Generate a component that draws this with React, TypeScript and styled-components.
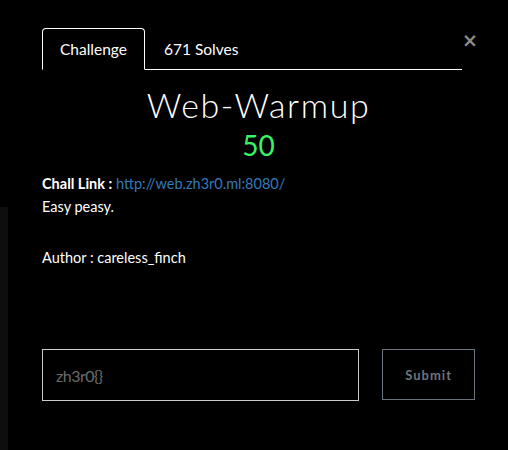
import styled, { createGlobalStyle } from "styled-components"

const Global = createGlobalStyle`
    html, body {
        margin: 0;
        height: 100%;
        background: linear-gradient(#0e0e0e, #0e0e0e) 0 207px / 8px 100% no-repeat, #000;
    }
    body {
        font-family: Lato, "Open Sans", sans-serif;
        color: #fff;
    }
`

const Modal = styled.div`
    width: 433px;
    padding: 28px 0 0 42px;
`

const Header = styled.div`
    display: flex;
    align-items: flex-start;
`

const Tabs = styled.ul`
    display: flex;
    flex: 0 0 420px;
    margin: 0;
    padding: 0;
    list-style: none;
    border-bottom: 1px solid #fff;
`

const Tab = styled.li<{ $active?: boolean }>`
    box-sizing: border-box;
    height: 42px;
    padding: 0 ${p => (p.$active ? "17px" : "18px")};
    display: flex;
    align-items: center;
    font-size: 15.5px;
    margin-bottom: -1px;
    border: 1px solid ${p => (p.$active ? "#fff" : "transparent")};
    border-bottom-color: ${p => (p.$active ? "#000" : "transparent")};
    border-radius: 4px 4px 0 0;
`

const Close = styled.button`
    margin-left: auto;
    margin-right: 1px;
    margin-top: 3px;
    background: none;
    border: 0;
    padding: 0;
    color: #8a8a8a;
    font-family: "DejaVu Sans", sans-serif;
    font-size: 19px;
    font-weight: 700;
    line-height: 1;
    cursor: pointer;
`

const Title = styled.h3`
    margin: 15px 0 0;
    text-align: center;
    font-family: Lato, sans-serif;
    font-weight: 300;
    font-size: 34px;
    letter-spacing: 1.6px;
    line-height: 40px;
`

const Points = styled.h4`
    margin: 3px 0 0;
    text-align: center;
    font-weight: 400;
    font-size: 28px;
    line-height: 34px;
    color: #3cf266;
`

const Description = styled.div`
    margin-top: 10px;
    font-size: 14.5px;
    line-height: 23px;
    p {
        margin: 0 0 28px;
    }
    strong {
        font-weight: 700;
    }
    a {
        color: #337ab7;
        text-decoration: none;
    }
`

const SubmitRow = styled.form`
    display: flex;
    gap: 23px;
    margin-top: 80px;
`

const FlagInput = styled.input`
    width: 318px;
    height: 52px;
    box-sizing: border-box;
    background: #000;
    border: 1px solid #ccc;
    padding: 0 13px;
    font-family: Lato, sans-serif;
    font-size: 16px;
    color: #fff;
    letter-spacing: -0.5px;
    &::placeholder {
        color: #6b6b6b;
    }
`

const SubmitButton = styled.button`
    width: 93px;
    height: 51px;
    background: #000;
    border: 1px solid #6c757d;
    color: #6c757d;
    font-family: Lato, sans-serif;
    font-weight: 700;
    font-size: 13px;
    letter-spacing: 1px;
`

export default function App() {
    return (
        <>
            <Global />
            <Modal>
                <Header>
                    <Tabs>
                        <Tab $active>Challenge</Tab>
                        <Tab>671 Solves</Tab>
                    </Tabs>
                    <Close>×</Close>
                </Header>
                <Title>Web-Warmup</Title>
                <Points>50</Points>
                <Description>
                    <p>
                        <strong>Chall Link :</strong> <a href="#">http://web.zh3r0.ml:8080/</a>
                        <br />
                        Easy peasy.
                    </p>
                    <p>Author : careless_finch</p>
                </Description>
                <SubmitRow onSubmit={e => e.preventDefault()}>
                    <FlagInput placeholder="zh3r0{}" />
                    <SubmitButton type="submit">Submit</SubmitButton>
                </SubmitRow>
            </Modal>
        </>
    )
}
